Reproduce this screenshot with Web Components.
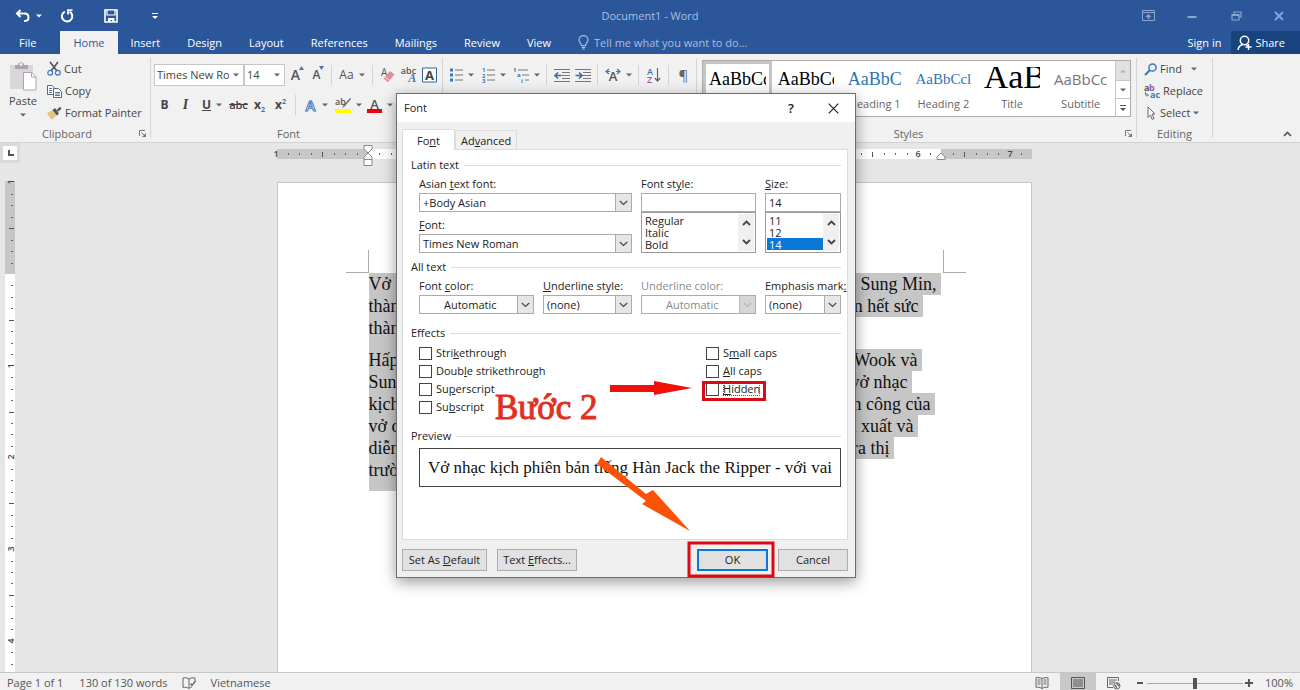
<!DOCTYPE html>
<html lang="en">
<head>
<meta charset="utf-8">
<title>Document1 - Word</title>
<style>
html, body { margin: 0; height: 100%; }
body { font: 11px/14px "Open Sans", "Noto Sans", sans-serif; color: #444; background: #e6e6e6; overflow: hidden; }
</style>
</head>
<body>
<word-app></word-app>
<script>
const define = (name, html, setup) => {
  const template = document.createElement('template');
  template.innerHTML = html;
  customElements.define(name, class extends HTMLElement {
    connectedCallback() {
      if (this.shadowRoot) return;
      const root = this.attachShadow({ mode: 'open' });
      root.append(template.content.cloneNode(true));
      if (setup) setup(this, root);
    }
  });
};

/* ---------- icons: [width, height, markup] ---------- */
const ICONS = {
  undo: [16, 14, '<path d="M5.500 1 L2 4.500 L5.500 8 M2.200 4.500 H9.500 C12 4.500 13.500 6.200 13.500 8.400 C13.500 10.800 12 12 9 12" fill="none" stroke="#fff" stroke-width="2"/>'],
  redo: [14, 14, '<path d="M4.800 2.600 A5.200 5.200 0 1 0 9.600 2.700" fill="none" stroke="#fff" stroke-width="2"/><path d="M8 5.500 V1.200 H12.500" fill="none" stroke="#fff" stroke-width="1.800"/>'],
  save: [14, 14, '<path d="M1 1 H13 V13 H1 Z" fill="none" stroke="#fff" stroke-width="1.600"/><path d="M3 1 H11 V6 H3 Z" fill="#2b579a" stroke="#fff" stroke-width="1.200"/><path d="M4 9 H10.500 V13 H8 V11 H6.500 V13 H4 Z" fill="#fff"/>'],
  customize: [8, 8, '<path d="M1 1.500 H7" stroke="#fff"/><path d="M1 4 H7 L4 7 Z" fill="#fff"/>'],
  downw: [6, 4, '<path d="M0 .5 H6 L3 3.500 Z" fill="#fff"/>'],
  down: [6, 4, '<path d="M0 .5 H6 L3 3.500 Z" fill="#666"/>'],
  up: [6, 4, '<path d="M0 3.500 H6 L3 .5 Z" fill="#b8b8b8"/>'],
  more: [8, 8, '<path d="M1 1.500 H7" stroke="#555"/><path d="M1 4 H7 L4 7 Z" fill="#555"/>'],
  ribbonopt: [13, 11, '<path d="M.5 .5 H12.500 V10.500 H.5 Z M.5 2.500 H12.500" fill="none" stroke="#8aa6d0"/><path d="M6.500 4 L9.500 7 H7.300 V9 H5.700 V7 H3.500 Z" fill="#8aa6d0"/>'],
  minimize: [10, 10, '<path d="M.5 6 H9.500" stroke="#8aa6d0" stroke-width="2"/>'],
  restore: [11, 10, '<path d="M3 3 V1 H10 V6 H8" fill="none" stroke="#8aa6d0" stroke-width="1.200"/><path d="M1 3.500 H8 V9 H1 Z M1 4.500 H8" fill="none" stroke="#8aa6d0" stroke-width="1.200"/>'],
  closew: [10, 10, '<path d="M1 1 L9 9 M9 1 L1 9" stroke="#8aa6d0" stroke-width="1.800"/>'],
  close: [11, 11, '<path d="M.7 .7 L10.300 10.300 M10.300 .7 L.7 10.300" stroke="#222" stroke-width="1.200"/>'],
  bulb: [11, 15, '<path d="M3.500 10.500 C3.500 8.500 1 7.500 1 4.900 A4.400 4.200 0 0 1 10 4.900 C10 7.500 7.500 8.500 7.500 10.500 Z M3.600 12.300 H7.400 M4.200 14 H6.800" fill="none" stroke="#a9bfe0" stroke-width="1.200"/>'],
  share: [16, 16, '<circle cx="7.500" cy="5.500" r="4.200" fill="none" stroke="#fff" stroke-width="1.500"/><path d="M1 15 C1.500 11.500 3.500 10 6 9.500 M9 9.500 L11 11" fill="none" stroke="#fff" stroke-width="1.500"/><path d="M11.500 9 V15 M8.500 12 H14.500" stroke="#fff" stroke-width="1.400"/>'],
  paste: [28, 30, '<path d="M1 4 H24 V28 H1 Z" fill="#d9d5db"/><path d="M6 4 H9 C9 .2 15 .2 15 4 H19 V8 H6 Z" fill="#aaa6ac"/><circle cx="12" cy="3.500" r="1.400" fill="#f1f1f1"/><path d="M14.500 11.500 H22.500 L27 16 V29 H14.500 Z" fill="#fff" stroke="#aaa6ac"/><path d="M22.500 11.500 V16 H27" fill="none" stroke="#aaa6ac"/>'],
  cut: [14, 14, '<path d="M3 0 L10 9 M11 0 L4 9" stroke="#555" stroke-width="1.700"/><circle cx="3.200" cy="10.800" r="2.400" fill="none" stroke="#3f76b5" stroke-width="1.200"/><circle cx="10.800" cy="10.800" r="2.400" fill="none" stroke="#3f76b5" stroke-width="1.200"/>'],
  copy: [15, 13, '<path d="M.5 .5 H5 L7 2.500 V9.500 H.5 Z" fill="#fff" stroke="#666"/><path d="M2 3.500 H5 M2 5.500 H5 M2 7.500 H5" stroke="#4a7ebb"/><path d="M6.500 3.500 H11.500 L14.500 6.500 V12.500 H6.500 Z" fill="#fff" stroke="#666"/><path d="M8 7.500 H13 M8 9 H13 M8 10.500 H13" stroke="#4a7ebb"/>'],
  painter: [15, 14, '<path d="M0 7 L6 4 L10 9 L5 13.500 L3 12 Z" fill="#e9c27c"/><path d="M5.500 4 L8 2 L12 7.500 L10 9.500 Z" fill="#555"/><path d="M9.500 4 L13 .8 L14.500 2.500 L11.500 5.500 Z" fill="#555"/>'],
  launcher: [8, 8, '<path d="M.5 6 V.5 H6" fill="none" stroke="#777"/><path d="M2.500 2.500 L6 6" stroke="#777"/><path d="M7 3 V7 H3 Z" fill="#777"/>'],
  eraser: [14, 16, '<text x="0" y="9" font-size="10" fill="#555">A</text><path d="M2.500 11.500 L9 4 L13.500 7.500 L7 15 Z" fill="#e58a97"/><path d="M4 9.700 L8.600 13.300" stroke="#f7dde0"/>'],
  frame: [15, 16, '<path d="M.5 1 H14.500 V15 H.5 Z" fill="#fff" stroke="#2f6496"/><text x="7.500" y="13" text-anchor="middle" font-size="13" font-weight="700" fill="#444">A</text>'],
  bullets: [13, 14, '<path d="M0 .5 H3 V3.500 H0 Z M0 5.500 H3 V8.500 H0 Z M0 10.500 H3 V13.500 H0 Z" fill="#3f76b5"/><path d="M5 2 H13 M5 7 H13 M5 12 H13" stroke="#777"/>'],
  numbers: [13, 16, '<text x="0" y="5" font-size="6" font-weight="700" fill="#3f76b5">1</text><text x="0" y="10.500" font-size="6" font-weight="700" fill="#3f76b5">2</text><text x="0" y="16" font-size="6" font-weight="700" fill="#3f76b5">3</text><path d="M5 3 H13 M5 8 H13 M5 13 H13" stroke="#777"/>'],
  multilevel: [16, 16, '<text x="0" y="5" font-size="6" font-weight="700" fill="#3f76b5">1</text><text x="4" y="10" font-size="6" font-weight="700" fill="#3f76b5">a</text><text x="8" y="16" font-size="6" font-weight="700" fill="#3f76b5">i</text><path d="M5 3 H15 M9 8 H16 M12 13 H16" stroke="#777"/>'],
  outdent: [16, 13, '<path d="M0 .5 H16 M8 3.500 H16 M8 6.500 H16 M8 9.500 H16 M0 12.500 H16" stroke="#777"/><path d="M7.500 6.500 H1.500 M4 3.500 L1 6.500 L4 9.500" fill="none" stroke="#2f6eb5" stroke-width="1.600"/>'],
  indent: [16, 13, '<path d="M0 .5 H16 M8 3.500 H16 M8 6.500 H16 M8 9.500 H16 M0 12.500 H16" stroke="#777"/><path d="M.5 6.500 H6 M4 3.500 L7 6.500 L4 9.500" fill="none" stroke="#2f6eb5" stroke-width="1.600"/>'],
  asian: [16, 14, '<text x="8" y="13" text-anchor="middle" font-size="13" font-weight="600" fill="#555">A</text><path d="M4 1 L1 3.500 L4 6 M1.500 3.500 H5 M12 1 L15 3.500 L12 6 M14.500 3.500 H11" fill="none" stroke="#3f76b5" stroke-width="1.200"/>'],
  sort: [14, 16, '<text x="0" y="7.500" font-size="9" font-weight="600" fill="#3f76b5">A</text><text x="0" y="15.500" font-size="9" font-weight="600" fill="#a05ab4">Z</text><path d="M10.500 1 V14 M7.800 11 L10.500 14 L13.200 11" fill="none" stroke="#666" stroke-width="1.200"/>'],
  texteffect: [13, 14, '<text x="6.500" y="12.500" text-anchor="middle" font-size="15" font-weight="600" fill="#fff" stroke="#3f76b5">A</text>'],
  highlight: [16, 16, '<text x="0" y="8" font-size="9" font-weight="600" fill="#555">ab</text><path d="M15 1 L8.500 8.500 L7 11 L9.500 9.500 L16 2 Z" fill="#666"/><path d="M0 12 H16 V16 H0 Z" fill="#ff0"/>'],
  fontcolor: [15, 15, '<text x="7.500" y="10.500" text-anchor="middle" font-size="13" font-weight="600" fill="#555">A</text><path d="M0 11 H15 V15 H0 Z" fill="#e60012"/>'],
  find: [13, 13, '<circle cx="8.500" cy="4.500" r="3.600" fill="none" stroke="#3f76b5" stroke-width="1.500"/><path d="M6 7 L1 12" stroke="#3f76b5" stroke-width="2"/>'],
  replace: [16, 16, '<text x="0" y="8" font-size="9" font-weight="700" fill="#555">a</text><text x="5" y="8" font-size="9" font-weight="700" fill="#9456a8">b</text><text x="6" y="15" font-size="9" font-weight="700" fill="#3f76b5">ac</text><path d="M1.500 9 V12 H4 M3 10.500 L4.500 12 L3 13.500" fill="none" stroke="#3f76b5"/>'],
  select: [13, 14, '<path d="M4 1 L11 8 H8 L10 12.500 L8 13.300 L6.500 9 L4 11.500 Z" fill="#fff" stroke="#666"/>'],
  collapse: [9, 6, '<path d="M1 5 L4.500 1.500 L8 5" fill="none" stroke="#555" stroke-width="1.700"/>'],
  proof: [14, 12, '<path d="M7 2 C5 .5 3 .5 1 1 V10.500 C3 10 5 10 7 11.500 C8 10.500 9 10.200 10 10 M7 2 V11.500 M7 2 C8.500 .8 10 .5 13 1 V4" fill="none" stroke="#666"/><path d="M8.500 6.500 L10 8.500 L13.500 4" fill="none" stroke="#666" stroke-width="1.300"/>'],
  read: [14, 12, '<path d="M7 1.500 C5 .5 3 .5 1 .7 V10.300 C3 10 5 10.200 7 11.500 C9 10.200 11 10 13 10.300 V.7 C11 .5 9 .5 7 1.500 V11.500 M2.500 3 H5.500 M2.500 5 H5.500 M2.500 7 H5.500 M8.500 3 H11.500 M8.500 5 H11.500 M8.500 7 H11.500" fill="none" stroke="#666"/>'],
  print: [14, 12, '<path d="M.5 .5 H13.500 V11.500 H.5 Z M2 3 H12 M2 5 H12 M2 7 H12 M2 9 H12" fill="none" stroke="#555"/>'],
  web: [14, 13, '<path d="M6 10.500 H.5 V.5 H11.500 V4 M2 3 H10 M2 5 H8 M2 7 H6" fill="none" stroke="#666"/><circle cx="9.800" cy="8.800" r="3.200" fill="#fff" stroke="#666"/><path d="M7.500 8 C9 8.500 9 10 10 11 M10 6 C10 8 11.500 8 12.500 9" fill="none" stroke="#666" stroke-width="1.500"/>'],
  chevron: [9, 6, '<path d="M.8 1 L4.500 4.500 L8.200 1" fill="none" stroke="#444" stroke-width="1.100"/>'],
  scrollup: [9, 6, '<path d="M1 5 L4.500 1.500 L8 5" fill="none" stroke="#444" stroke-width="1.800"/>'],
  scrolldown: [9, 6, '<path d="M1 1 L4.500 4.500 L8 1" fill="none" stroke="#444" stroke-width="1.800"/>']
};
define('ui-icon', `<style>:host{display:inline-flex;flex:none}svg{display:block;overflow:visible}</style>`, (host, root) => {
  const [w, h, body] = ICONS[host.getAttribute('name')];
  root.innerHTML += `<svg width="${w}" height="${h}" viewBox="0 0 ${w} ${h}" aria-hidden="true">${body}</svg>`;
});

/* ---------- title bar and tabs ---------- */
define('title-bar', `<style>
:host{display:grid;grid-template-columns:1fr auto 1fr;align-items:center;height:31px;background:#2b579a;color:#a9bfe0;line-height:16px}
.quick,.win{display:flex;align-items:center}
.win{justify-content:flex-end}
button{all:unset;display:flex;align-items:center;justify-content:center;width:44px;height:28px;gap:5px}
.quick{padding-left:11px}
.quick button:first-child{width:34px}
.win button:last-child{width:42px}
</style>
<div class="quick"><button aria-label="Undo"><ui-icon name="undo"></ui-icon><ui-icon name="downw"></ui-icon></button><button aria-label="Repeat"><ui-icon name="redo"></ui-icon></button><button aria-label="Save"><ui-icon name="save"></ui-icon></button><button aria-label="Customize toolbar"><ui-icon name="customize"></ui-icon></button></div>
<span>Document1 - Word</span>
<div class="win"><button aria-label="Ribbon options"><ui-icon name="ribbonopt"></ui-icon></button><button aria-label="Minimize"><ui-icon name="minimize"></ui-icon></button><button aria-label="Restore"><ui-icon name="restore"></ui-icon></button><button aria-label="Close"><ui-icon name="closew"></ui-icon></button></div>`);

define('ribbon-tabs', `<style>
:host{display:flex;height:23px;background:#2b579a;color:#fff}
button{all:unset;box-sizing:border-box;display:flex;align-items:center;height:23px;padding:0 14px 0 13px}
.file{padding:0 24px 0 19px}
.on{background:#f1f1f1;color:#2b579a;padding:0 13px}
.tell{color:#a9bfe0;gap:5px}
.signin{margin-left:auto;padding:0 10px}
.share{background:#19437f;gap:2px;padding:0 15px 0 6px}
</style>
<button class="file">File</button><button class="on">Home</button><button>Insert</button><button>Design</button><button>Layout</button><button>References</button><button>Mailings</button><button>Review</button><button>View</button><button class="tell"><ui-icon name="bulb"></ui-icon>Tell me what you want to do...</button><button class="signin">Sign in</button><button class="share"><ui-icon name="share"></ui-icon>Share</button>`);

/* ---------- ribbon ---------- */
define('ribbon-group', `<style>
:host{display:flex;flex-direction:column;box-sizing:border-box;position:relative;padding:4px 0 0 3px}
:host::after{content:"";position:absolute;right:0;top:4px;bottom:4px;width:1px;background:#d4d4d4}
.body{flex:1}
footer{display:flex;align-items:center;gap:8px;height:16px;color:#666;padding-right:4px}
footer span{flex:1;text-align:center}
</style><div class="body"><slot></slot></div><footer><span></span></footer>`, (host, root) => {
  root.querySelector('span').textContent = host.getAttribute('label') || '';
  if (host.hasAttribute('launcher')) root.querySelector('footer').insertAdjacentHTML('beforeend', '<ui-icon name="launcher"></ui-icon>');
});

define('tool-button', `<style>
:host{display:block;flex:none}
button{all:unset;display:flex;align-items:center;justify-content:center;width:21px;height:22px;gap:5px;white-space:nowrap}
:host([menu]) button{width:32px}
:host([text]) button{width:auto;justify-content:flex-start;gap:3px}
</style><button><slot></slot></button>`, (host, root) => {
  if (host.hasAttribute('menu')) root.querySelector('button').insertAdjacentHTML('beforeend', '<ui-icon name="down"></ui-icon>');
  root.querySelector('button').setAttribute('aria-label', host.getAttribute('label') || host.textContent);
});

define('ribbon-select', `<style>
:host{display:flex;position:relative;box-sizing:border-box;height:22px;border:1px solid #c6c6c6;background:#fff}
select{all:unset;flex:1;min-width:0;padding:0 14px 0 2px;line-height:20px;overflow:hidden;white-space:nowrap}
ui-icon{position:absolute;right:4px;top:8px}
</style><select></select><ui-icon name="down"></ui-icon>`, (host, root) => {
  const select = root.querySelector('select');
  select.add(new Option(host.getAttribute('value')));
  select.setAttribute('aria-label', host.getAttribute('label'));
});

define('style-card', `<style>
:host{display:block;min-width:0}
button{all:unset;display:block;box-sizing:border-box;width:100%;height:55px;padding:0 6px 4px;text-align:center;color:#666}
:host([selected]) button{box-shadow:inset 0 0 0 3px #c6c6c6}
.demo{display:block;height:35px;line-height:35px;overflow:hidden;white-space:nowrap;font-family:"Liberation Serif",serif;font-size:18px;color:#000;text-align:left}
:host([kind=h1]) .demo{color:#2e74b5;text-align:center}
:host([kind=h2]) .demo{font-size:15px;color:#2e74b5;text-align:center}
:host([kind=title]) .demo{font-size:34px;height:26px;line-height:20px;margin:5px 0 4px}
:host([kind=sub]) .demo{font-family:"Open Sans",sans-serif;font-size:15px;color:#777;text-align:center}
.name{display:block;min-height:14px}
</style><button><span class="demo"></span><span class="name"><slot></slot></span></button>`, (host, root) => {
  root.querySelector('.demo').textContent = host.getAttribute('demo');
});

define('style-gallery', `<style>
:host{display:flex;box-sizing:border-box;height:57px;margin:2px 6px 0 2px;border:1px solid #ababab;background:#fff}
.cards{flex:1;display:grid;grid-template-columns:repeat(6,1fr);overflow:hidden}
.scroll{display:grid;grid-template-rows:19px 18px 18px;width:14px;border-left:1px solid #c6c6c6}
.scroll button{all:unset;display:flex;align-items:center;justify-content:center}
.scroll button+button{border-top:1px solid #c6c6c6}
.scroll button:first-child{background:#e1e1e1}
</style>
<div class="cards"><style-card selected demo="AaBbCc"></style-card><style-card demo="AaBbCc"></style-card><style-card kind="h1" demo="AaBbC">Heading 1</style-card><style-card kind="h2" demo="AaBbCcl">Heading 2</style-card><style-card kind="title" demo="AaB">Title</style-card><style-card kind="sub" demo="AaBbCc">Subtitle</style-card></div>
<div class="scroll"><button aria-label="Previous styles"><ui-icon name="up"></ui-icon></button><button aria-label="Next styles"><ui-icon name="down"></ui-icon></button><button aria-label="More styles"><ui-icon name="more"></ui-icon></button></div>`);

define('word-ribbon', `<style>
:host{display:flex;height:88px;background:#f1f1f1;border-bottom:1px solid #d2d2d2}
.clip{width:151px}.font{width:292px}.para{width:254px}.styles{flex:1;min-width:0}.edit{width:76px}
.end{display:flex;align-items:flex-end;justify-content:flex-end;flex:0 0 87px;box-sizing:border-box;padding:0 8px 5px 0}
.row{display:flex;align-items:center}
.start{align-items:flex-start}
.top{padding-top:6px}
.low{padding-top:8px}
.sep{width:1px;height:20px;background:#d4d4d4;margin:0 4px}
.paste{all:unset;display:flex;flex-direction:column;align-items:center;width:40px;padding-top:3px}
.paste span{margin:3px 0 5px}
.list{margin-left:4px}
.edit tool-button{margin-left:4px}
.find{margin-right:6px}
.glyph{font-weight:700;font-size:12px}
i.glyph{font-family:"Liberation Serif",serif;font-size:14px}
.big{font-size:14px;font-weight:600;color:#555}
.mid{font-size:12px;font-weight:600;color:#555}
.tick{align-self:flex-start;margin:2px -4px 0 -6px}
sub,sup{font-size:7px;line-height:0;color:#3f76b5}
.case{font-size:12px;color:#555}
.strike{font-weight:600}
.phon{display:flex;flex-direction:column;line-height:7px;font-size:9px;font-weight:600;color:#555}
.phon b{align-self:flex-end;color:#3f76b5;font:italic 700 12px/9px "Liberation Serif",serif}
.pil{font-size:15px;color:#666}
</style>
<ribbon-group class="clip" label="Clipboard" launcher><div class="row start">
<button class="paste"><ui-icon name="paste"></ui-icon><span>Paste</span><ui-icon name="down"></ui-icon></button>
<div class="list"><tool-button text><ui-icon name="cut"></ui-icon>Cut</tool-button><tool-button text><ui-icon name="copy"></ui-icon>Copy</tool-button><tool-button text><ui-icon name="painter"></ui-icon>Format Painter</tool-button></div></div></ribbon-group>
<ribbon-group class="font" label="Font" launcher>
<div class="row top"><ribbon-select style="width:90px" value="Times New Ro" label="Font name"></ribbon-select><ribbon-select style="width:41px" value="14" label="Font size"></ribbon-select>
<tool-button label="Grow font"><span class="big">A</span><svg class="tick" width="5" height="4"><path d="M0 4H5L2.500 0Z" fill="#3f76b5"/></svg></tool-button><tool-button label="Shrink font"><span class="mid">A</span><svg class="tick" width="5" height="4"><path d="M0 0H5L2.500 4Z" fill="#3f76b5"/></svg></tool-button><span class="sep"></span>
<tool-button menu label="Change case"><span class="case">Aa</span></tool-button><span class="sep"></span>
<tool-button label="Clear formatting"><ui-icon name="eraser"></ui-icon></tool-button><tool-button label="Phonetic guide"><span class="phon">abc<b>A</b></span></tool-button><tool-button label="Character border"><ui-icon name="frame"></ui-icon></tool-button></div>
<div class="row low"><tool-button label="Bold"><b class="glyph">B</b></tool-button><tool-button label="Italic"><i class="glyph">I</i></tool-button><tool-button menu label="Underline"><u class="glyph">U</u></tool-button><tool-button label="Strikethrough"><s class="strike">abc</s></tool-button><tool-button label="Subscript"><span class="glyph">x<sub>2</sub></span></tool-button><tool-button label="Superscript"><span class="glyph">x<sup>2</sup></span></tool-button><span class="sep"></span>
<tool-button menu label="Text effects"><ui-icon name="texteffect"></ui-icon></tool-button><tool-button menu label="Highlight"><ui-icon name="highlight"></ui-icon></tool-button><tool-button menu label="Font color"><ui-icon name="fontcolor"></ui-icon></tool-button></div></ribbon-group>
<ribbon-group class="para"><div class="row top"><tool-button menu label="Bullets"><ui-icon name="bullets"></ui-icon></tool-button><tool-button menu label="Numbering"><ui-icon name="numbers"></ui-icon></tool-button><tool-button menu label="Multilevel list"><ui-icon name="multilevel"></ui-icon></tool-button><span class="sep"></span>
<tool-button label="Decrease indent"><ui-icon name="outdent"></ui-icon></tool-button><tool-button label="Increase indent"><ui-icon name="indent"></ui-icon></tool-button><span class="sep"></span><tool-button menu label="Asian layout"><ui-icon name="asian"></ui-icon></tool-button><span class="sep"></span><tool-button label="Sort"><ui-icon name="sort"></ui-icon></tool-button><span class="sep"></span><tool-button label="Show marks"><span class="pil">¶</span></tool-button></div></ribbon-group>
<ribbon-group class="styles" label="Styles" launcher><style-gallery></style-gallery></ribbon-group>
<ribbon-group class="edit" label="Editing"><tool-button text menu><ui-icon name="find"></ui-icon><span class="find">Find</span></tool-button><tool-button text><ui-icon name="replace"></ui-icon>Replace</tool-button><tool-button text menu><ui-icon name="select"></ui-icon>Select</tool-button></ribbon-group>
<div class="end"><ui-icon name="collapse"></ui-icon></div>`);

/* ---------- document area ---------- */
const INCH = 91.7;
define('word-ruler', `<style>:host{display:block;flex:none}svg{display:block;overflow:visible}</style>`, (host, root) => {
  const vertical = host.hasAttribute('vertical');
  const length = +host.getAttribute('length'), zero = +host.getAttribute('zero'), end = +host.getAttribute('end') || length;
  /* Along is the running direction of the strip, across its thickness. */
  const rect = (along, across, run, thick, fill) => vertical
    ? `<rect x="${across}" y="${along}" width="${thick}" height="${run}" fill="${fill}"/>`
    : `<rect x="${along}" y="${across}" width="${run}" height="${thick}" fill="${fill}"/>`;
  let out = rect(0, 0, length, 10, '#c6c6c6') + rect(zero, 0, end - zero, 10, '#fff');
  for (let k = -8; zero + k * INCH / 8 < length; k++) {
    const p = Math.round(zero + k * INCH / 8);
    if (k === 0) continue;
    if (k % 8 === 0) {
      const place = vertical ? `transform="translate(9 ${p}) rotate(-90)"` : `x="${p}" y="8"`;
      out += `<text ${place} text-anchor="middle">${Math.abs(k / 8)}</text>`;
    } else if (k % 4 === 0) out += rect(p, vertical ? 4 : 3, 1, 5, '#555');
    else out += rect(p, vertical ? 6 : 4, 1, 2, '#666');
  }
  if (!vertical) {
    out += `<g fill="#fff" stroke="#888"><path d="M87 -3.500H95V0L91 4L87 0Z"/><path d="M91 4L95 8V10.500H87V8Z"/><path d="M87 10.500H95V16.500H87Z"/><path d="M${end} 4L${end + 4} 8V10.500H${end - 4}V8Z"/></g>`;
  }
  const w = vertical ? 10 : length, h = vertical ? length : 10;
  root.innerHTML += `<svg width="${w}" height="${h}" font-size="9" font-weight="600" fill="#444">${out}</svg>`;
});

define('doc-line', `<style>
:host{display:block;background:#c6c6c6;height:22px}
div{display:flex;justify-content:space-between;box-sizing:border-box;padding-right:4px;white-space:pre}
</style><div><slot></slot></div>`, (host) => { host.style.width = host.getAttribute('width') + 'px'; });

define('word-page', `<style>
:host{display:block;box-sizing:border-box;width:755px;flex:none;background:#fff;border:1px solid #c6c6c6;border-bottom:0;padding:0 88px 0 91px;color:#111;font:18px/22px "Liberation Serif",serif}
.marks{display:flex;justify-content:space-between;margin:67px -23px 0;height:23px}
.marks span{width:22px;border-bottom:1px solid #aaa}
.marks span:first-child{border-right:1px solid #aaa}
.marks span:last-child{border-left:1px solid #aaa}
p{margin:0}
.gap{height:10px;background:#c6c6c6;width:300px}
</style>
<div class="marks"><span></span><span></span></div>
<p><doc-line width="572"><span>Vở nhạc</span><span>o Sung Min,</span></doc-line><doc-line width="554"><span>thành</span><span>n hết sức</span></doc-line><doc-line width="300"><span>thành</span></doc-line></p>
<div class="gap"></div>
<p><doc-line width="553"><span>Hấp</span><span>Wook và</span></doc-line><doc-line width="543"><span>Sung</span><span>vở nhạc</span></doc-line><doc-line width="566"><span>kịch</span><span>h công của</span></doc-line><doc-line width="549"><span>vở diễn</span><span>n xuất và</span></doc-line><doc-line width="525"><span>diễn</span><span>ra thị</span></doc-line><doc-line width="300"><span>trường</span></doc-line></p>
<div class="gap"></div>`);

define('doc-area', `<style>
:host{display:grid;grid-template:38px 1fr/15px 1fr;flex:1;min-height:0;overflow:hidden;background:#e6e6e6}
.corner{box-sizing:border-box;width:20px;height:20px;border:3px solid #dadada;background:#fff;display:flex;align-items:center;justify-content:center}
.hr,.sheet{display:flex;justify-content:center;padding-right:7px}
.hr{padding-top:6px}
.sheet{padding-top:1px}
.vr{padding-left:5px;overflow:hidden;min-height:0}
</style>
<div class="corner"><svg width="7" height="7"><path d="M2 0V5H7" fill="none" stroke="#555" stroke-width="2"/></svg></div>
<div class="hr"><word-ruler length="755" zero="91" end="664"></word-ruler></div>
<div class="vr"><word-ruler vertical length="1100" zero="93"></word-ruler></div>
<div class="sheet"><word-page></word-page></div>`);

define('status-bar', `<style>
:host{display:flex;align-items:center;box-sizing:border-box;height:18px;background:#f1f1f1;border-top:1px solid #c6c6c6;padding:3px 7px 0;color:#555}
.count{margin:0 14px 0 16px}
.lang{margin:0 auto 0 15px}
.view{display:flex;align-items:center;justify-content:center;width:36px;align-self:stretch;margin-top:-3px;padding-top:3px}
.on{background:#c8c8c8}
.view:last-of-type{margin-right:0}
.minus{margin-left:5px}
input{appearance:none;width:96px;height:12px;margin:0 2px;background:linear-gradient(#aaa,#aaa) center/100% 1px no-repeat}
input::-webkit-slider-thumb{appearance:none;width:4px;height:11px;background:#555}
.pct{margin-left:12px}
</style>
<span>Page 1 of 1</span><span class="count">130 of 130 words</span><ui-icon name="proof"></ui-icon><span class="lang">Vietnamese</span>
<span class="view"><ui-icon name="read"></ui-icon></span><span class="view on"><ui-icon name="print"></ui-icon></span><span class="view"><ui-icon name="web"></ui-icon></span>
<svg class="minus" width="8" height="8"><path d="M0 4H6" stroke="#555" stroke-width="2"/></svg><input type="range" aria-label="Zoom"><svg width="8" height="8"><path d="M0 4H8M4 0V8" stroke="#555" stroke-width="2"/></svg><span class="pct">100%</span>`);

/* ---------- font dialog ---------- */
define('field-combo', `<style>
:host{display:block;min-width:0}
label{display:block;line-height:14px;white-space:nowrap;margin-bottom:2px}
.box{display:flex;position:relative;box-sizing:border-box;height:19px;border:1px solid #ababab;background:#fff}
select{all:unset;flex:1;min-width:0;padding:0 18px 0 3px;line-height:17px}
:host([center]) select{padding-left:24px}
.btn{position:absolute;right:0;top:0;bottom:0;width:15px;display:flex;align-items:center;justify-content:center;background:#e6e6e6;border-left:1px solid #ababab;pointer-events:none}
:host([disabled]){color:#888}
:host([disabled]) .btn{background:#ccc;opacity:.8}
:host([disabled]) .btn ui-icon{opacity:.3}
</style><label for="s"><slot></slot></label><div class="box"><select id="s"></select><span class="btn"><ui-icon name="chevron"></ui-icon></span></div>`, (host, root) => {
  const select = root.querySelector('select');
  select.add(new Option(host.getAttribute('value')));
  select.disabled = host.hasAttribute('disabled');
});

define('field-list', `<style>
:host{display:block;min-width:0}
label{display:block;line-height:14px;margin-bottom:2px}
input{display:block;box-sizing:border-box;width:100%;height:19px;border:1px solid #ababab;padding:0 3px;font:inherit;color:inherit;outline:0;border-radius:0}
.box{display:flex;box-sizing:border-box;height:41px;border:1px solid #999;background:#fff;padding:1px}
select{all:unset;flex:1;min-width:0;overflow:hidden;height:37px}
option{display:flex;align-items:center;font:inherit;line-height:12px;height:12px;min-height:12px;padding:0 0 0 2px;color:#222}
option:checked{background:linear-gradient(#0a78d4,#0a78d4);color:#fff}
.bar{width:16px;display:flex;flex-direction:column;align-items:center;justify-content:space-between;background:#f0f0f0;padding:6px 0;box-sizing:border-box}
</style><label for="i"><slot></slot></label><input id="i"><div class="box"><select size="3" aria-label="Values"></select><span class="bar"><ui-icon name="scrollup"></ui-icon><ui-icon name="scrolldown"></ui-icon></span></div>`, (host, root) => {
  const value = host.getAttribute('value') || '';
  root.querySelector('input').value = value;
  for (const item of host.getAttribute('items').split(',')) root.querySelector('select').add(new Option(item, item, item === value, item === value));
});

define('check-field', `<style>
:host{display:block;height:18px}
label{display:inline-flex;align-items:center;height:18px;gap:4px;white-space:nowrap}
input{appearance:none;box-sizing:border-box;width:13px;height:13px;margin:0;border:1px solid #444;background:#fff}
:host([focused]) span{outline:1px dotted #555;outline-offset:-1px}
</style><label><input type="checkbox"><span><slot></slot></span></label>`);

define('field-group', `<style>
:host{display:block}
h3{display:flex;align-items:center;gap:5px;margin:0;font:inherit;line-height:14px}
h3::after{content:"";flex:1;height:1px;background:#dcdcdc}
.body{padding-left:8px}
</style><h3></h3><div class="body"><slot></slot></div>`, (host, root) => { root.querySelector('h3').textContent = host.getAttribute('label'); });

define('dialog-button', `<style>
:host{display:block;position:relative}
button{all:unset;box-sizing:border-box;width:100%;height:22px;border:1px solid #adadad;background:#e1e1e1;text-align:center;line-height:20px}
:host([primary]) button{border:2px solid #0a78d4;line-height:18px}
</style><button><slot></slot></button>`);

define('guide-marks', `<style>
:host{position:absolute;inset:-1px;pointer-events:none}
svg{display:block;overflow:visible}
</style><svg width="460" height="486">
<g fill="none" stroke="#dc0a14" stroke-width="3"><rect x="307.500" y="289.500" width="61" height="17"/><rect x="293" y="450" width="84" height="33"/></g>
<path d="M214 292H258V288L296 295L258 302V299H214Z" fill="#ee1208"/>
<path d="M205 364L250 401L257 397L294 438L246 411L250 408L201 371Z" fill="#fb5207"/>
<text x="99" y="326" font-family="Liberation Serif, serif" font-size="35" fill="#e2301f" stroke="#e2301f">Bước 2</text></svg>`);

define('font-dialog', `<style>
:host{display:block;box-sizing:border-box;width:460px;border:1px solid #6e6e6e;background:#f0f0f0;color:#222;box-shadow:0 4px 14px rgba(0,0,0,.4)}
header{display:flex;align-items:center;height:28px;background:#fff;padding:0 16px 0 7px}
header button{all:unset;display:flex;font-size:13px;font-weight:600}
header .help{margin:0 34px 0 auto}
.body{padding:7px 7px 6px 5px}
nav{display:flex;align-items:flex-end}
nav button{all:unset;box-sizing:border-box;height:19px;border:1px solid #dcdcdc;border-bottom:0;padding:0 5px;line-height:19px}
nav .on{height:21px;width:53px;text-align:center;background:#fff;margin-bottom:-1px;position:relative;line-height:19px}
.panel{border:1px solid #dcdcdc;background:#fff;padding:8px 6px 52px 8px}
.grid{display:grid;gap:0 9px;padding-top:5px}
.a{grid-template-columns:213px 115px 1fr}
.b{grid-template-columns:115px 89px 115px 1fr}
.c{grid-template-columns:278px 1fr;padding-top:4px}
.stack{display:flex;flex-direction:column;gap:6px}
.all{margin-top:7px}.fx{margin-top:12px}.pv{margin-top:13px}
.preview{display:flex;align-items:center;justify-content:center;box-sizing:border-box;height:39px;margin-top:5px;border:1px solid #444;overflow:hidden;white-space:nowrap;color:#111;font:17px/22px "Liberation Serif",serif}
footer{display:flex;gap:10px;margin-top:9px}
.w1{width:85px}.w2{width:80px}.w3{width:71px}.w4{width:70px}
.push{margin-left:auto}
</style>
<header><span>Font</span><button class="help" aria-label="Help">?</button><button aria-label="Close"><ui-icon name="close"></ui-icon></button></header>
<div class="body"><nav><button class="on">Fo<u>n</u>t</button><button>Ad<u>v</u>anced</button></nav>
<div class="panel">
<field-group label="Latin text"><div class="grid a"><div class="stack"><field-combo value="+Body Asian">Asian <u>t</u>ext font:</field-combo><field-combo value="Times New Roman"><u>F</u>ont:</field-combo></div><field-list items="Regular,Italic,Bold">Font st<u>y</u>le:</field-list><field-list value="14" items="11,12,14"><u>S</u>ize:</field-list></div></field-group>
<field-group class="all" label="All text"><div class="grid b"><field-combo center value="Automatic">Font <u>c</u>olor:</field-combo><field-combo value="(none)"><u>U</u>nderline style:</field-combo><field-combo center disabled value="Automatic">Underline color:</field-combo><field-combo value="(none)">Emphasis mark<u>:</u></field-combo></div></field-group>
<field-group class="fx" label="Effects"><div class="grid c"><div><check-field>Stri<u>k</u>ethrough</check-field><check-field>Doub<u>l</u>e strikethrough</check-field><check-field>Su<u>p</u>erscript</check-field><check-field>Su<u>b</u>script</check-field></div><div><check-field>S<u>m</u>all caps</check-field><check-field><u>A</u>ll caps</check-field><check-field focused><u>H</u>idden</check-field></div></div></field-group>
<field-group class="pv" label="Preview"><div class="preview">Vở nhạc kịch phiên bản tiếng Hàn Jack the Ripper - với vai</div></field-group>
</div>
<footer><dialog-button class="w1">Set As <u>D</u>efault</dialog-button><dialog-button class="w2">Text <u>E</u>ffects...</dialog-button><dialog-button class="w3 push" primary>OK</dialog-button><dialog-button class="w4">Cancel</dialog-button></footer></div>
<guide-marks></guide-marks>`);

define('word-app', `<style>
:host{display:flex;flex-direction:column;height:100vh;min-width:1100px;position:relative;overflow:hidden}
font-dialog{position:absolute;left:calc(50% - 254px);top:93px}
</style><title-bar></title-bar><ribbon-tabs></ribbon-tabs><word-ribbon></word-ribbon><doc-area></doc-area><status-bar></status-bar><font-dialog></font-dialog>`);
</script>
</body>
</html>
